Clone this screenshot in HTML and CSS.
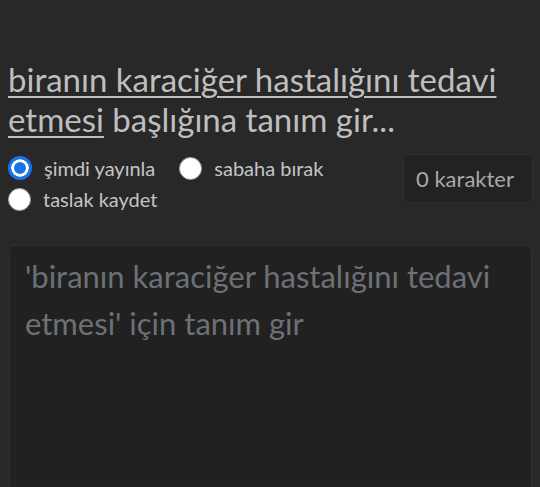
FILE: index.html
```html
<!DOCTYPE html>
<html lang="tr">
<head>
<meta charset="utf-8">
<link rel="stylesheet" href="styles.css">
</head>
<body>
<main class="page">
  <h1 class="title"><span class="u">biranın karaciğer hastalığını tedavi etmesi</span> başlığına tanım gir...</h1>
  <div class="options">
    <div class="radios">
      <label class="opt"><span class="radio checked"></span><span class="opt-text">şimdi yayınla</span></label>
      <label class="opt"><span class="radio"></span><span class="opt-text">sabaha bırak</span></label>
      <label class="opt"><span class="radio"></span><span class="opt-text">taslak kaydet</span></label>
    </div>
    <div class="counter">0 karakter</div>
  </div>
  <div class="editor"><span class="placeholder">'biranın karaciğer hastalığını tedavi etmesi' için tanım gir</span></div>
</main>
</body>
</html>
```

FILE: styles.css
```css
html, body {
  margin: 0;
  padding: 0;
  background: #282828;
  height: 100%;
  overflow: hidden;
}
.page {
  padding: 59px 8px 0 8px;
  font-family: Lato, "Liberation Sans", sans-serif;
  color: #c2c2c2;
}
.title {
  margin: 0;
  font-size: 33px;
  font-weight: 400;
  line-height: 40px;
  color: #bfbfbf;
}
.u {
  text-decoration: underline;
  text-decoration-thickness: 2px;
  text-underline-offset: 4px;
}
.options {
  display: flex;
  justify-content: space-between;
  align-items: flex-start;
  margin-top: 16px;
}
.radios {
  display: flex;
  flex-wrap: wrap;
  width: 360px;
  column-gap: 24px;
  row-gap: 5px;
}
.opt {
  display: flex;
  align-items: center;
  gap: 12px;
  font-size: 20px;
  line-height: 26px;
  color: #c4c4c4;
}
.radio {
  width: 23px;
  height: 23px;
  border-radius: 50%;
  background: #fff;
  box-sizing: border-box;
  border: 1px solid #9a9a9a;
  flex: none;
}
.radio.checked {
  width: 24px;
  height: 24px;
  border: 3px solid #1a73e8;
  background: #1a73e8;
  box-shadow: inset 0 0 0 3px #fff;
}
.counter {
  margin-top: -1px;
  margin-right: -1px;
  width: 130px;
  height: 49px;
  box-sizing: border-box;
  border: 1px solid #2e2e2e;
  border-radius: 4px;
  background: #222;
  font-size: 22px;
  display: flex;
  align-items: center;
  justify-content: center;
  padding-right: 6px;
  color: #a8a8a8;
}
.editor {
  margin: 33px 0 0 1px;
  width: 523px;
  height: 260px;
  box-sizing: border-box;
  border: 1px solid #2f2f2f;
  border-radius: 5px;
  background: #212121;
  padding: 7px 15px;
  font-size: 31px;
  line-height: 47px;
}
.placeholder {
  color: #6d7176;
}
```
